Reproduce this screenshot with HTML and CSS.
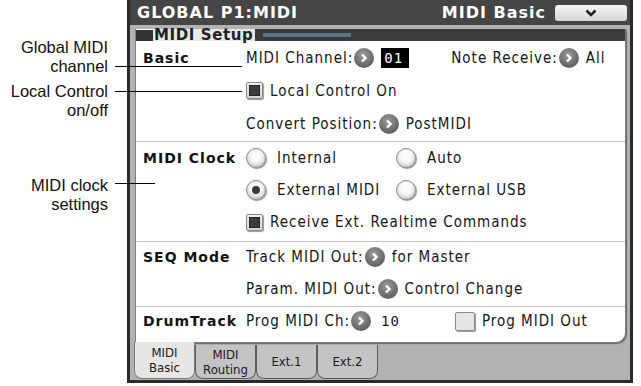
FILE: index.html
```html
<!DOCTYPE html>
<html lang="en">
<head>
    <meta charset="UTF-8">
    <meta name="viewport" content="width=device-width, initial-scale=1.0">
    <title>GLOBAL P1:MIDI - MIDI Basic</title>
    <link rel="stylesheet" href="styles.css">
</head>
<body>
    <div class="page">
        <!-- callouts on the left -->
        <div class="notes">
            <div class="note note-channel">
                <div class="note-text">Global MIDI<br>channel</div>
                <span class="lead"></span>
            </div>
            <div class="note note-local">
                <div class="note-text">Local Control<br>on/off</div>
                <span class="lead"></span>
            </div>
            <div class="note note-clock">
                <div class="note-text">MIDI clock<br>settings</div>
                <span class="lead short"></span>
            </div>
        </div>

        <div class="screen">
            <div class="titlebar">
                <span>GLOBAL P1:MIDI</span>
                <span class="title-right">MIDI Basic</span>
                <div class="menu-btn">
                    <svg width="12" height="8" viewBox="0 0 12 8"><polyline points="1.5,1.5 6,6 10.5,1.5" fill="none" stroke="#222" stroke-width="2.6"/></svg>
                </div>
            </div>

            <div class="panel">
                <div class="panel-head">
                    <span class="head-blk"></span>
                    <span class="head-title">MIDI Setup</span>
                    <div class="head-bar"><span class="head-meter"></span></div>
                </div>

                <div class="section sec-basic">
                    <div class="row">
                        <span class="label">Basic</span>
                        <span>MIDI Channel:</span>
                        <span class="arrow"><svg width="8" height="10" viewBox="0 0 8 10"><polyline points="2,1.5 5.5,5 2,8.5" fill="none" stroke="#fff" stroke-width="2.4"/></svg></span>
                        <span class="value-box">01</span>
                        <span class="note-recv">Note Receive:</span>
                        <span class="arrow"><svg width="8" height="10" viewBox="0 0 8 10"><polyline points="2,1.5 5.5,5 2,8.5" fill="none" stroke="#fff" stroke-width="2.4"/></svg></span>
                        <span class="value">All</span>
                    </div>
                    <div class="row">
                        <span class="label"></span>
                        <span class="check on"><span></span></span>
                        <span class="check-text">Local Control On</span>
                    </div>
                    <div class="row">
                        <span class="label"></span>
                        <span>Convert Position:</span>
                        <span class="arrow"><svg width="8" height="10" viewBox="0 0 8 10"><polyline points="2,1.5 5.5,5 2,8.5" fill="none" stroke="#fff" stroke-width="2.4"/></svg></span>
                        <span class="value">PostMIDI</span>
                    </div>
                </div>

                <div class="section sec-clock">
                    <div class="row">
                        <span class="label">MIDI Clock</span>
                        <div class="radio-col"><span class="radio"></span><span class="radio-text">Internal</span></div>
                        <div class="radio-col"><span class="radio"></span><span class="radio-text">Auto</span></div>
                    </div>
                    <div class="row">
                        <span class="label"></span>
                        <div class="radio-col"><span class="radio on"></span><span class="radio-text">External MIDI</span></div>
                        <div class="radio-col"><span class="radio"></span><span class="radio-text">External USB</span></div>
                    </div>
                    <div class="row">
                        <span class="label"></span>
                        <span class="check on"><span></span></span>
                        <span class="check-text">Receive Ext. Realtime Commands</span>
                    </div>
                </div>

                <div class="section sec-seq">
                    <div class="row">
                        <span class="label">SEQ Mode</span>
                        <span>Track MIDI Out:</span>
                        <span class="arrow"><svg width="8" height="10" viewBox="0 0 8 10"><polyline points="2,1.5 5.5,5 2,8.5" fill="none" stroke="#fff" stroke-width="2.4"/></svg></span>
                        <span class="value">for Master</span>
                    </div>
                    <div class="row">
                        <span class="label"></span>
                        <span>Param. MIDI Out:</span>
                        <span class="arrow"><svg width="8" height="10" viewBox="0 0 8 10"><polyline points="2,1.5 5.5,5 2,8.5" fill="none" stroke="#fff" stroke-width="2.4"/></svg></span>
                        <span class="value">Control Change</span>
                    </div>
                </div>

                <div class="section sec-drum">
                    <div class="row">
                        <span class="label">DrumTrack</span>
                        <span>Prog MIDI Ch:</span>
                        <span class="arrow"><svg width="8" height="10" viewBox="0 0 8 10"><polyline points="2,1.5 5.5,5 2,8.5" fill="none" stroke="#fff" stroke-width="2.4"/></svg></span>
                        <span class="value num">10</span>
                        <span class="check off prog-out"></span>
                        <span class="check-text">Prog MIDI Out</span>
                    </div>
                </div>
            </div>

            <div class="tabs">
                <div class="tab active">MIDI<br>Basic</div>
                <div class="tab">MIDI<br>Routing</div>
                <div class="tab">Ext.1</div>
                <div class="tab">Ext.2</div>
            </div>
        </div>
    </div>
</body>
</html>
```

FILE: styles.css
```css
body { margin: 0; background: #fff; font-family: "DejaVu Sans Condensed", "DejaVu Sans", sans-serif; font-stretch: condensed; }
.page { display: flex; width: 641px; height: 386px; }

/* callouts */
.notes { position: relative; z-index: 2; width: 127px; flex: none; box-sizing: border-box; padding-top: 38px; font-family: "Liberation Sans", Arial, sans-serif; font-stretch: normal; font-size: 16.5px; line-height: 19px; color: #111; }
.note { display: flex; align-items: flex-start; width: 242px; }
.note-text { width: 108px; flex: none; text-align: right; }
.lead { width: 127px; height: 1px; margin-left: 7px; background: #000; }
.lead.short { width: 40px; }
.note-channel .lead { margin-top: 28px; }
.note-local { margin-top: 6px; }
.note-local .lead { margin-top: 9px; }
.note-clock { margin-top: 56px; }
.note-clock .lead { margin-top: 7px; }

/* instrument screen */
.screen { width: 506px; height: 383px; flex: none; box-sizing: border-box; border: 3px solid #2b2b2b; border-top: 0; background: #b2b2b2; display: flex; flex-direction: column; }
.titlebar { height: 25px; flex: none; display: flex; align-items: center; padding: 0 3px 0 7px; background: #454545; color: #fff; font-family: "DejaVu Sans", sans-serif; font-stretch: normal; font-weight: bold; font-size: 16px; letter-spacing: 1px; }
.title-right { margin-left: auto; margin-right: 9px; }
.menu-btn { width: 72px; height: 16px; display: flex; align-items: center; justify-content: center; background: linear-gradient(#f6f6f6, #d6d6d6); border-radius: 3px; }

.panel { height: 314px; flex: none; margin: 4px 4px 0 5px; box-sizing: border-box; background: #fff; border: 1px solid #7c7c7c; border-top: 0; border-radius: 0 0 10px 0; box-shadow: 1px 1px 1px #6a6a6a; display: flex; flex-direction: column; }
.panel-head { height: 12px; display: flex; align-items: center; }
.head-blk { width: 17px; height: 11px; background: #333; }
.head-title { padding: 0 2px 0 1px; font-family: "DejaVu Sans", sans-serif; font-stretch: normal; font-weight: bold; font-size: 15px; letter-spacing: 0.6px; line-height: 12px; color: #222; background: #e8e8e8; }
.head-bar { flex: 1; height: 12px; display: flex; align-items: center; padding-left: 8px; background: #3b3b3b; }
.head-meter { width: 88px; height: 4px; background: #5b7283; }

.section { border-bottom: 1px solid #c4c4c4; }
.sec-basic { padding-bottom: 1px; }
.row { height: 33px; display: flex; align-items: center; font-size: 15px; letter-spacing: 1px; color: #151515; }
.sec-clock { padding-bottom: 3px; }
.sec-clock .row { height: 32px; }
.sec-seq .row { height: 29px; }
.sec-seq .row + .row { height: 35px; }
.sec-drum { border-bottom: 0; }
.sec-drum .row { height: 28px; }
.label { width: 103px; flex: none; padding-left: 7px; font-family: "DejaVu Sans", sans-serif; font-stretch: normal; font-weight: bold; font-size: 14px; letter-spacing: 1px; color: #111; }

.arrow { width: 20px; height: 20px; flex: none; margin: 0 7px 0 1px; border-radius: 50%; display: flex; align-items: center; justify-content: center; background: radial-gradient(circle at 45% 35%, #9c9c9c, #6a6a6a 60%, #4e4e4e); }
.value-box { width: 28px; height: 20px; margin-left: 0; box-sizing: border-box; padding-left: 3px; background: #000; color: #fff; font-family: "DejaVu Sans Mono", monospace; font-size: 14px; line-height: 20px; letter-spacing: 1px; }
.num { margin-left: 3px; font-family: "DejaVu Sans Mono", monospace; font-size: 14px; }
.note-recv { margin-left: 42px; }

.check { width: 17px; height: 17px; flex: none; box-sizing: border-box; border: 1px solid #8a8a8a; border-radius: 2px; background: linear-gradient(#f2f2f2, #d4d4d4); display: flex; align-items: center; justify-content: center; box-shadow: 1px 1px 1px #9a9a9a; }
.check.on span { width: 9px; height: 9px; background: #3c3c3c; border: 1px solid #222; }
.check.off { width: 20px; height: 19px; background: #e6e6e6; }
.check-text { margin-left: 7px; }
.prog-out { margin-left: 55px; }

.radio-col { width: 150px; display: flex; align-items: center; }
.radio { width: 20px; height: 20px; flex: none; box-sizing: border-box; border-radius: 50%; border: 1px solid #8c8c8c; background: radial-gradient(circle at 50% 40%, #fbfbfb 35%, #dcdcdc 65%, #a8a8a8); box-shadow: 1px 1px 1px #8a8a8a; display: flex; align-items: center; justify-content: center; }
.radio.on::after { content: ""; width: 8px; height: 8px; border-radius: 50%; background: #3a3a3a; }
.radio-text { margin-left: 11px; }

/* page tabs */
.tabs { flex: 1; display: flex; padding-left: 4px; }
.tab { width: 61px; height: 34px; margin-top: 2px; box-sizing: border-box; border: 1px solid #5c5c5c; border-top: 0; border-radius: 0 0 8px 8px; background: #c4c4c4; display: flex; align-items: center; justify-content: center; text-align: center; font-size: 13px; line-height: 15px; color: #1a1a1a; }
.tab.active { height: 37px; margin-top: -1px; background: #e6e6e6; border-color: #7c7c7c; }
```
